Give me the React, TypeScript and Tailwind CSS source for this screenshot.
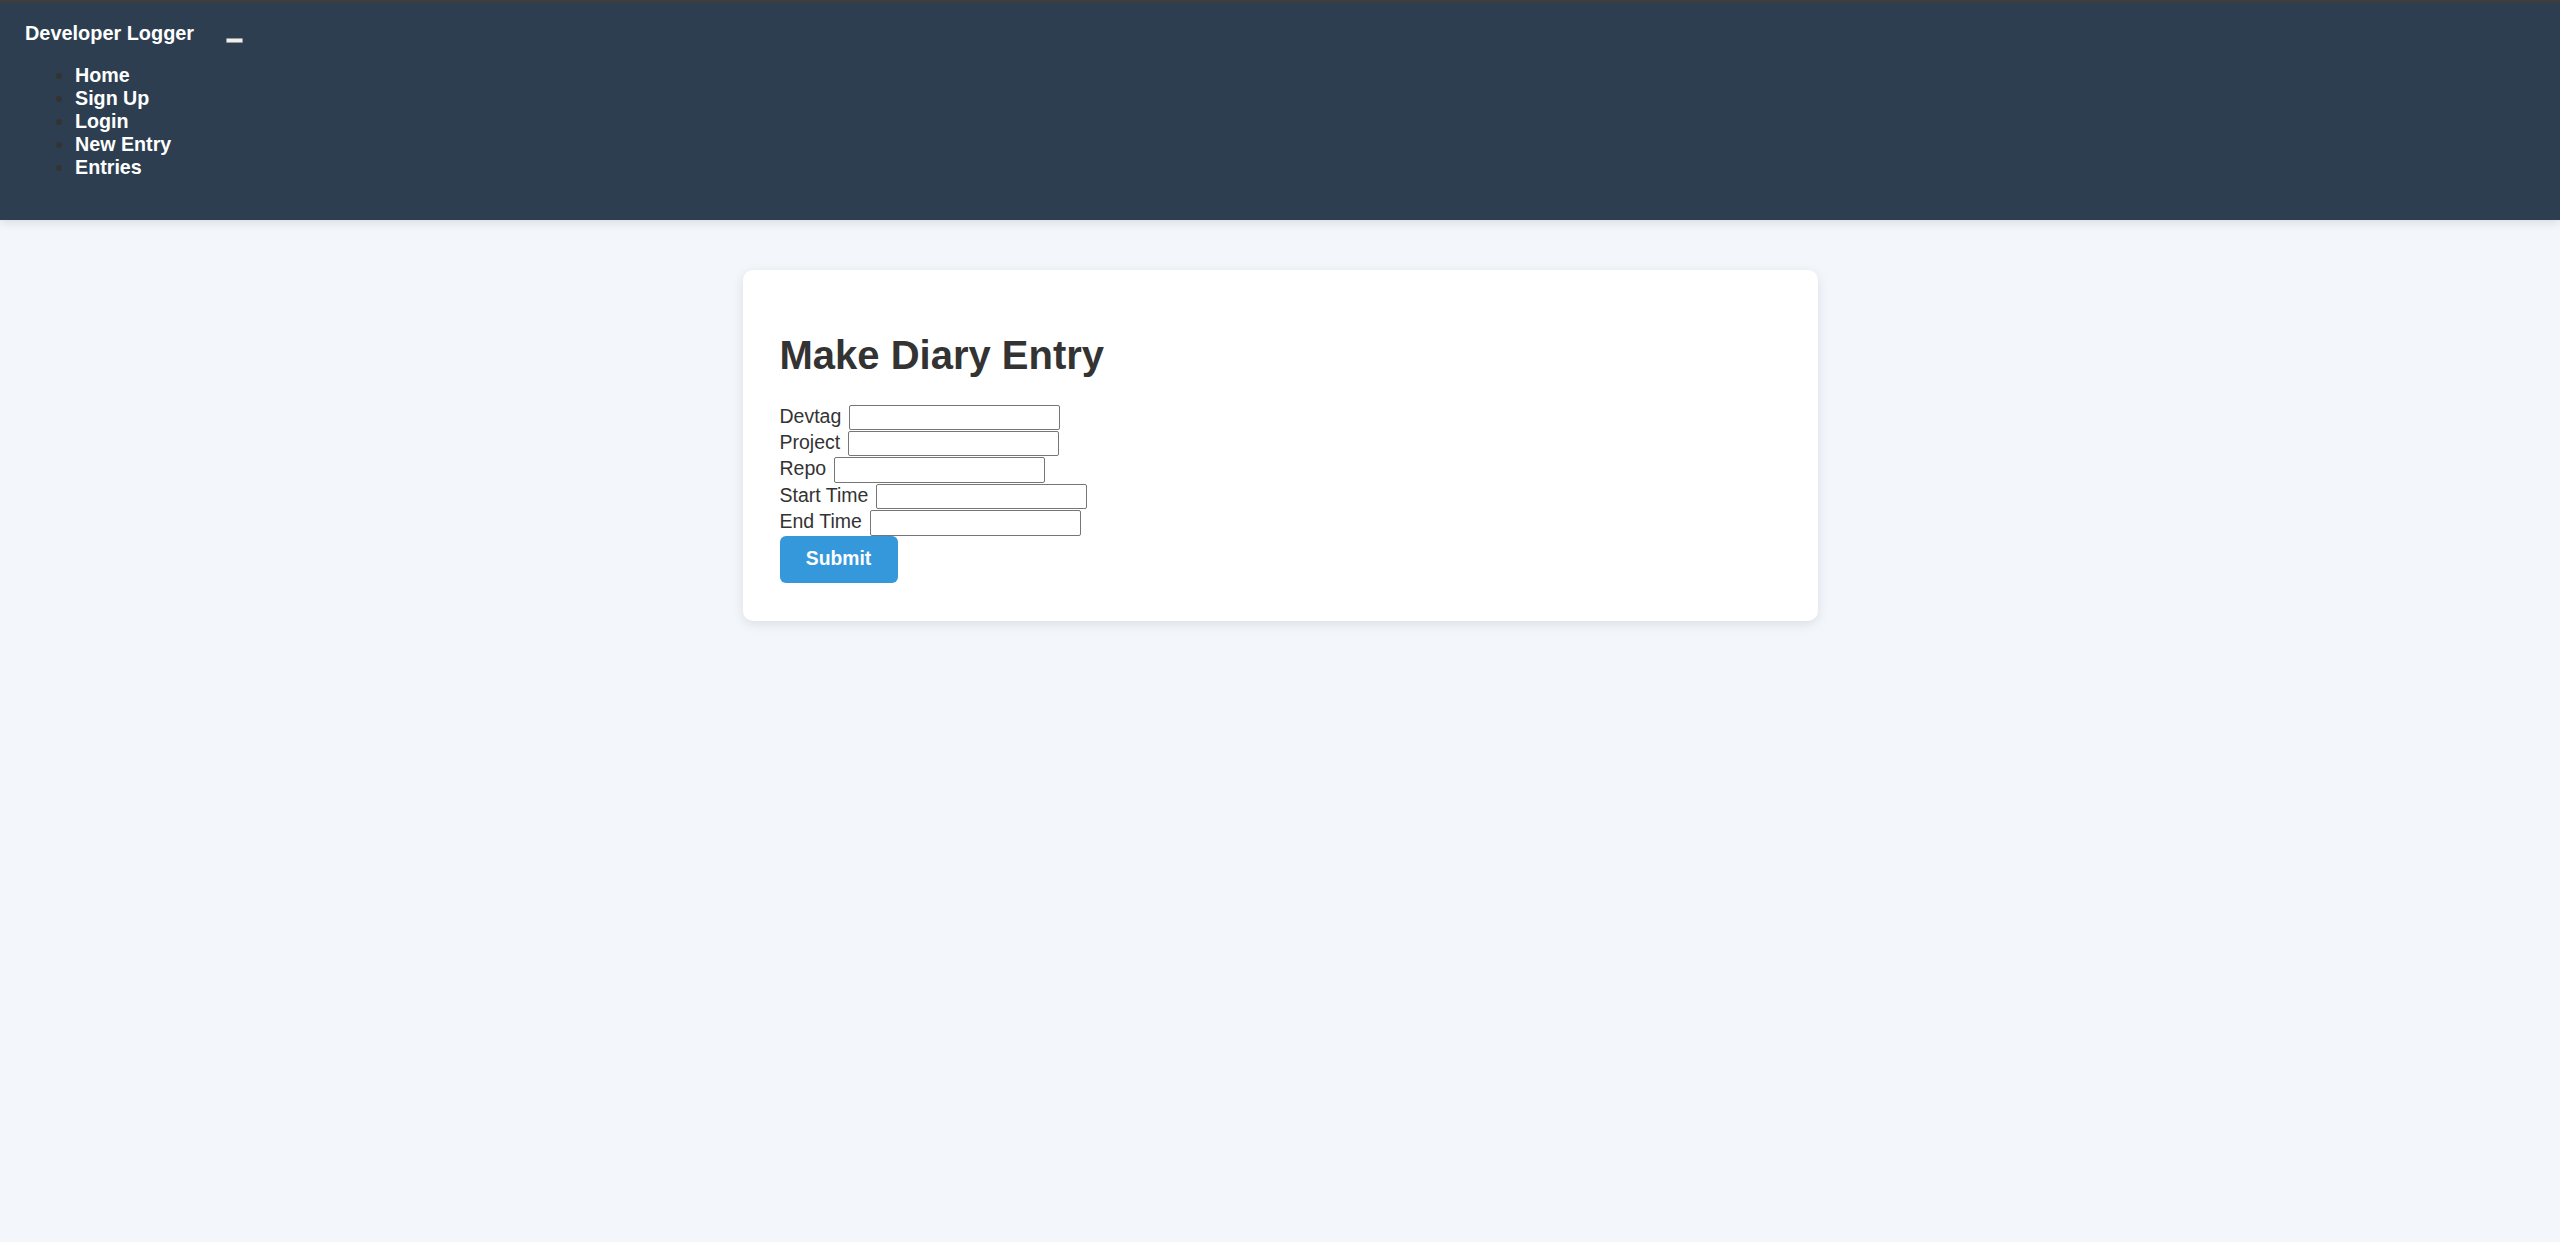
import React from "react";

const links = ["Home", "Sign Up", "Login", "New Entry", "Entries"];
const fields = ["Devtag", "Project", "Repo", "Start Time", "End Time"];

function Header() {
  return (
    <header className="border-t-[3px] border-[#3d3d3d] bg-[#2c3e50] pl-[25px] pt-[19px] pb-[22px] shadow-[0_2px_10px_rgba(0,0,0,0.12)]">
      <div className="flex items-start">
        <span className="text-[19.9px] leading-[22.5px] font-bold text-white">Developer Logger</span>
        <button
          type="button"
          aria-label="Toggle menu"
          className="ml-[32px] mt-[16px] h-[5px] w-[17px] rounded-[1px] border border-[#9a9a9a] bg-[#efefef]"
        />
      </div>
      <ul className="mt-[19px] mb-[19px] list-disc pl-[50px] text-[#333] marker:text-[#333]">
        {links.map((l) => (
          <li key={l} className="text-[19.7px] leading-[23px]">
            <a href="#" className="font-bold text-white">
              {l}
            </a>
          </li>
        ))}
      </ul>
    </header>
  );
}

function EntryForm() {
  return (
    <div className="mx-auto mt-[50px] w-[1075px] rounded-[10px] bg-white px-[37px] pt-[37px] pb-[38px] shadow-[0_3px_12px_rgba(0,0,0,0.1)]">
      <h1 className="mt-[25px] mb-[27px] text-[40px] leading-[46px] font-bold text-[#333]">Make Diary Entry</h1>
      <form className="flex flex-col items-start" onSubmit={(e) => e.preventDefault()}>
        <div className="flex flex-col gap-[1.2px]">
          {fields.map((f) => (
            <div key={f} className="flex items-start gap-2">
              <label className="text-[19.5px] leading-[22px] text-[#333]">{f}</label>
              <input
                type="text"
                className="h-[25.3px] w-[211px] rounded-[2px] border border-[#767676] bg-white px-1 text-[16px]"
              />
            </div>
          ))}
        </div>
        <button
          type="submit"
          className="h-[47px] w-[118px] rounded-[6px] bg-[#3498db] text-[19.3px] font-bold text-white"
        >
          Submit
        </button>
      </form>
    </div>
  );
}

export default function App() {
  return (
    <div className="min-h-[1242px] bg-[#f3f6fa] font-['Liberation_Sans',Arial,sans-serif]">
      <Header />
      <EntryForm />
    </div>
  );
}
